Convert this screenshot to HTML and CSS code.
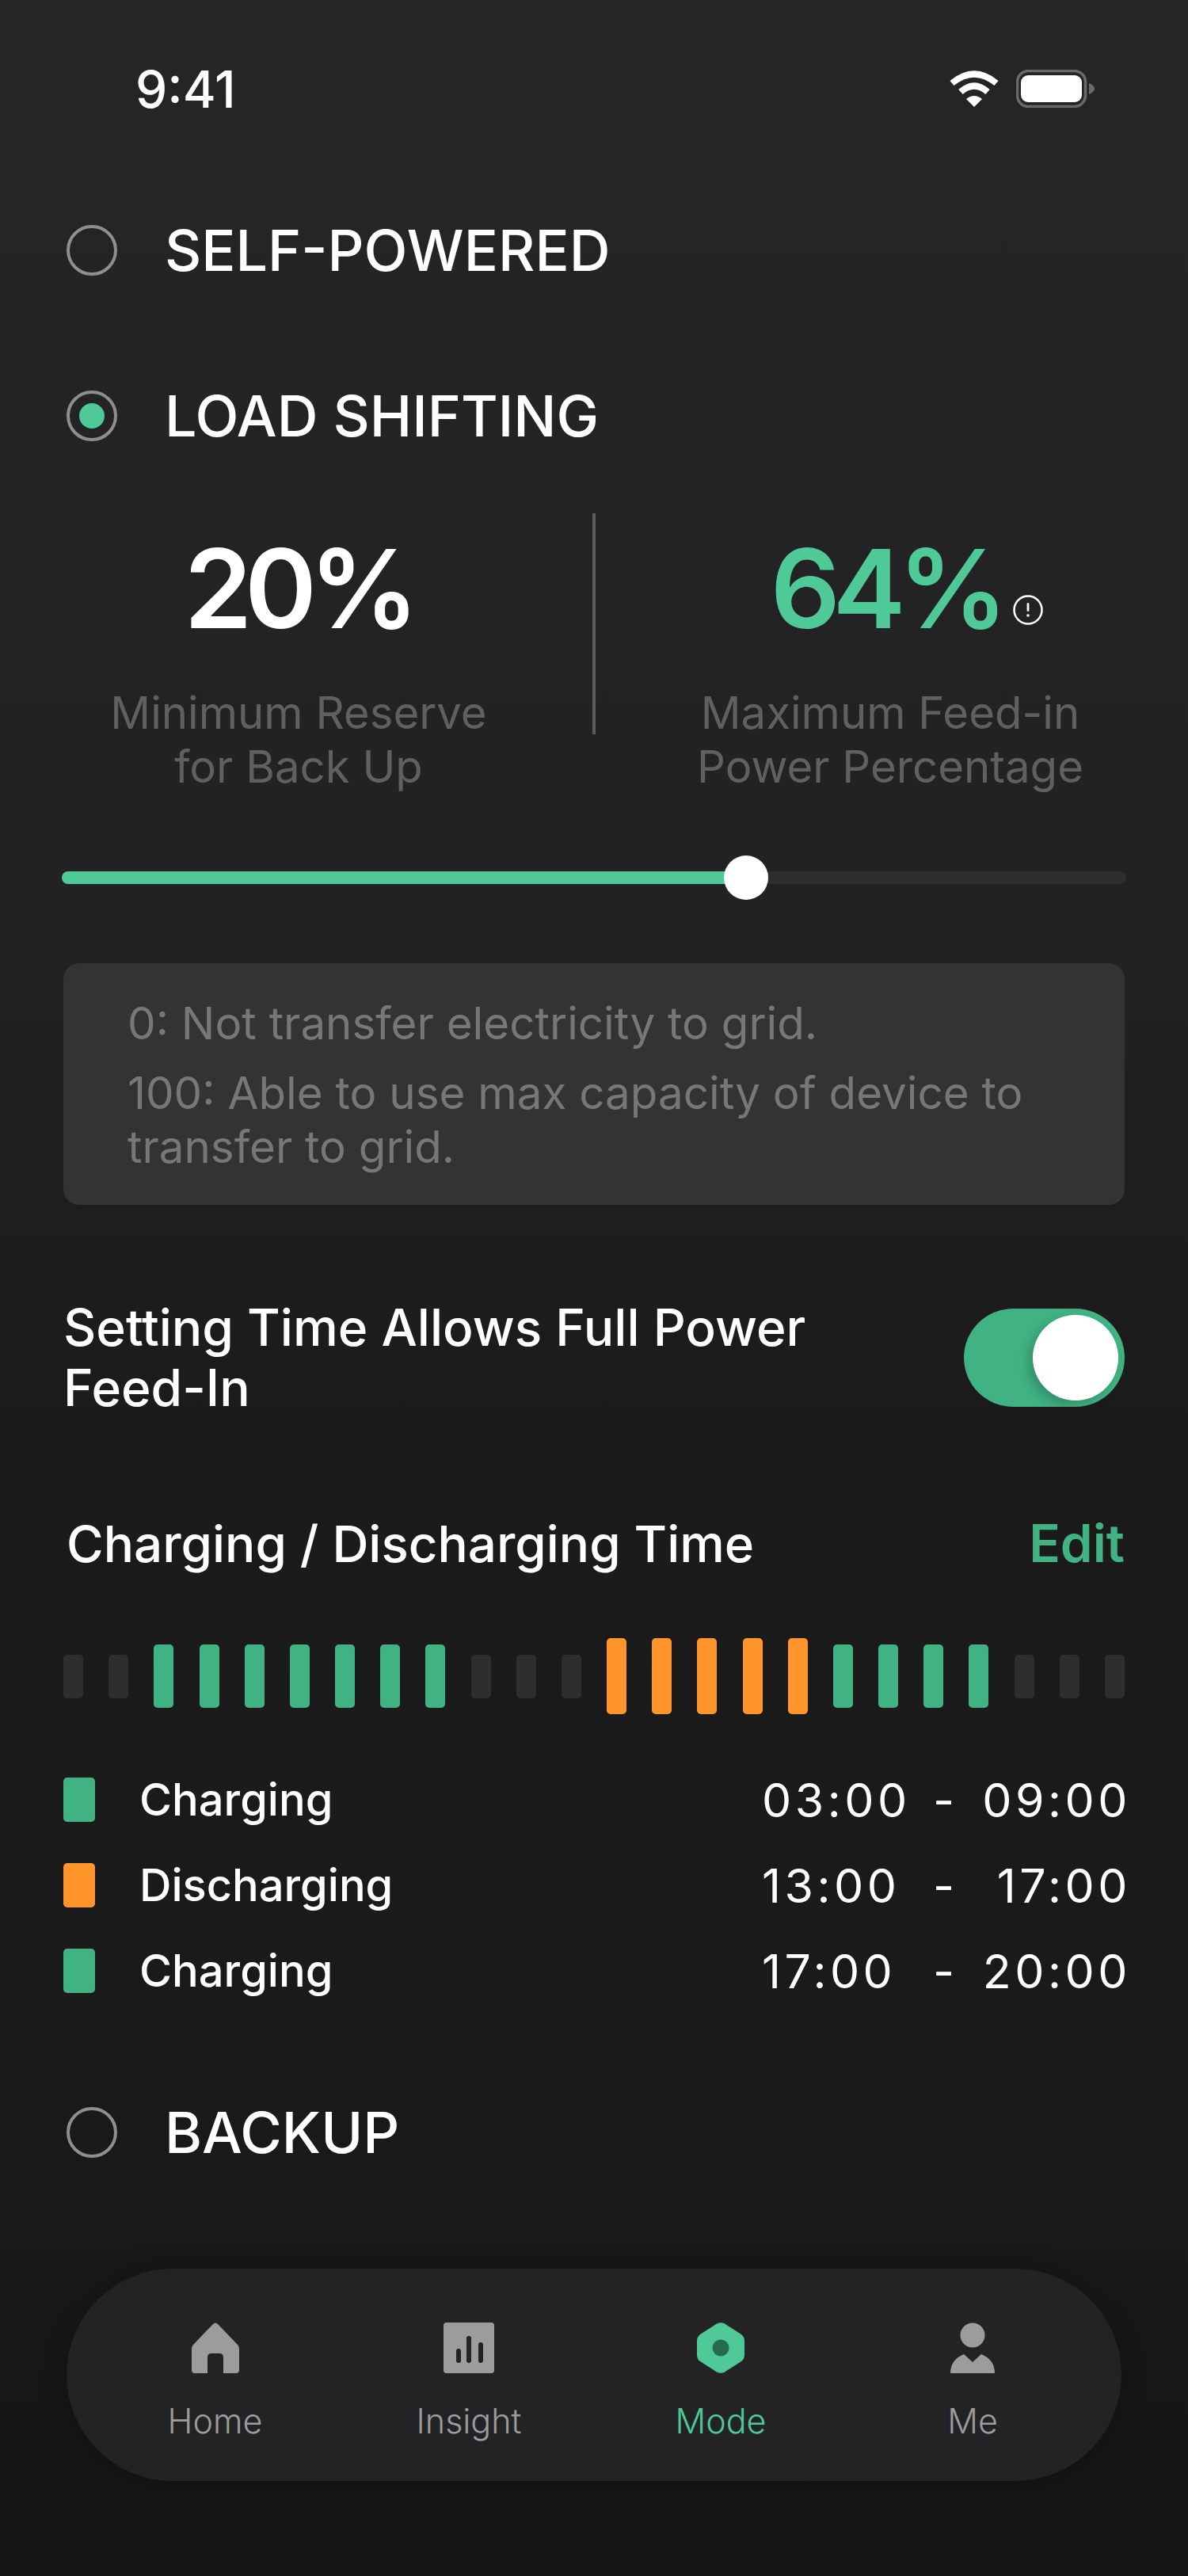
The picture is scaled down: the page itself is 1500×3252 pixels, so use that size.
FILE: index.html

```html
<!DOCTYPE html>
<html lang="en">
<head>
  <meta charset="UTF-8" />
  <meta name="viewport" content="width=device-width, initial-scale=1" />
  <title>Mode</title>
  <link rel="stylesheet" href="styles.css">
</head>
<body>
  <div class="status">
    <span class="clock">9:41</span>
    <div class="status-icons">
      <svg class="wifi" width="64" height="46" viewBox="0 0 64 46">
        <path d="M4 16 Q32 -7 60 16" fill="none" stroke="#fff" stroke-width="8" />
        <path d="M15 27 Q32 12 49 27" fill="none" stroke="#fff" stroke-width="8" />
        <path d="M22 36 Q32 28 42 36 L32 46 Z" fill="#fff" />
      </svg>
      <svg class="battery" width="99" height="48" viewBox="0 0 99 48">
        <rect x="1.5" y="1.5" width="86" height="45" rx="14" fill="none" stroke="#6a6a6a" stroke-width="3.5" />
        <rect x="6" y="7" width="77" height="34" rx="9" fill="#fff" />
        <path d="M92 17 Q99 20 99 24 Q99 28 92 31 Z" fill="#6a6a6a" />
      </svg>
    </div>
  </div>

  <div class="mode first">
    <span class="radio"></span>
    <span class="mode-name">SELF-POWERED</span>
  </div>
  <div class="mode second">
    <span class="radio on"></span>
    <span class="mode-name">LOAD SHIFTING</span>
  </div>

  <div class="stats">
    <div class="stat left">
      <div class="stat-value">20%</div>
      <div class="stat-label">Minimum Reserve<br>for Back Up</div>
    </div>
    <div class="divider"></div>
    <div class="stat right">
      <div class="stat-value green">
        <span class="value-wrap">64%
          <svg class="alert" width="38" height="38" viewBox="0 0 38 38">
            <circle cx="19" cy="19" r="17.5" fill="none" stroke="#fff" stroke-width="2.5" />
            <rect x="17.6" y="10" width="2.8" height="11" rx="1.4" fill="#fff" />
            <circle cx="19" cy="26" r="1.8" fill="#fff" />
          </svg>
        </span>
      </div>
      <div class="stat-label">Maximum Feed-in<br>Power Percentage</div>
    </div>
  </div>

  <div class="slider">
    <div class="slider-fill"></div>
    <div class="slider-thumb"></div>
  </div>

  <div class="note">
    <p>0: Not transfer electricity to grid.</p>
    <p>100: Able to use max capacity of device to transfer to grid.</p>
  </div>

  <div class="setting">
    <div class="setting-text">Setting Time Allows Full Power Feed-In</div>
    <div class="toggle"><div class="knob"></div></div>
  </div>

  <div class="time-head">
    <span>Charging / Discharging Time</span>
    <span class="edit">Edit</span>
  </div>

  <div class="bars">
    <i class="idle"></i><i class="idle"></i>
    <i class="charge"></i><i class="charge"></i><i class="charge"></i><i class="charge"></i><i class="charge"></i><i class="charge"></i><i class="charge"></i>
    <i class="idle"></i><i class="idle"></i><i class="idle"></i>
    <i class="discharge"></i><i class="discharge"></i><i class="discharge"></i><i class="discharge"></i><i class="discharge"></i>
    <i class="charge"></i><i class="charge"></i><i class="charge"></i><i class="charge"></i>
    <i class="idle"></i><i class="idle"></i><i class="idle"></i>
  </div>

  <div class="slots">
    <div class="slot">
      <span class="swatch"></span>
      <span class="slot-name">Charging</span>
      <span class="slot-time"><span>03:00</span><span class="dash">-</span><span>09:00</span></span>
    </div>
    <div class="slot">
      <span class="swatch orange"></span>
      <span class="slot-name">Discharging</span>
      <span class="slot-time"><span>13:00</span><span class="dash">-</span><span>17:00</span></span>
    </div>
    <div class="slot">
      <span class="swatch"></span>
      <span class="slot-name">Charging</span>
      <span class="slot-time"><span>17:00</span><span class="dash">-</span><span>20:00</span></span>
    </div>
  </div>

  <div class="mode third">
    <span class="radio"></span>
    <span class="mode-name">BACKUP</span>
  </div>

  <nav class="tabbar">
    <div class="tab">
      <svg width="60" height="64" viewBox="0 0 60 64">
        <path fill-rule="evenodd" d="M27 2 Q30 -1 33 2 L58 28 Q60 30 60 33 V60 Q60 64 56 64 H40 V44 Q40 39 35 39 H25 Q20 39 20 44 V64 H4 Q0 64 0 60 V33 Q0 30 2 28 Z" fill="#9c9c9c" />
      </svg>
      <span>Home</span>
    </div>
    <div class="tab">
      <svg width="64" height="64" viewBox="0 0 64 64">
        <rect width="64" height="64" rx="4" fill="#9c9c9c" />
        <rect x="16" y="33" width="6" height="18" rx="3" fill="#232326" />
        <rect x="29" y="17" width="6" height="34" rx="3" fill="#232326" />
        <rect x="44" y="25" width="6" height="26" rx="3" fill="#232326" />
      </svg>
      <span>Insight</span>
    </div>
    <div class="tab active">
      <svg width="60" height="64" viewBox="0 0 60 64">
        <path d="M25 1.5 Q30 -1 35 1.5 L56 15 Q60 18 60 23 V41 Q60 46 56 49 L35 62.5 Q30 65 25 62.5 L4 49 Q0 46 0 41 V23 Q0 18 4 15 Z" fill="#4fc998" />
        <ellipse cx="30" cy="32" rx="10.5" ry="10.5" fill="#27694e" />
      </svg>
      <span>Mode</span>
    </div>
    <div class="tab">
      <svg width="56" height="64" viewBox="0 0 56 64">
        <ellipse cx="28" cy="16" rx="15.500" ry="15.500" fill="#9c9c9c" />
        <path d="M0 64 Q0 47 17 40 L28 50 L39 40 Q56 47 56 64 Z" fill="#9c9c9c" />
      </svg>
      <span>Me</span>
    </div>
  </nav>
</body>
</html>
```

FILE: styles.css

```css
html, body {
  margin: 0;
  padding: 0;
}
body {
  width: 1500px;
  height: 3252px;
  overflow: hidden;
  background: linear-gradient(180deg, #252528 0%, #222225 35%, #1b1b1c 55%, #1a1a1a 80%, #151515 100%);
  color: #fff;
  font-family: Inter, "Liberation Sans", sans-serif;
}

/* status bar */
.status {
  height: 224px;
  display: flex;
  align-items: center;
  justify-content: space-between;
  padding: 0 118px 0 171px;
  box-sizing: border-box;
}
.clock {
  font-size: 64px;
  font-weight: 500;
}
.status-icons {
  display: flex;
  align-items: center;
  gap: 21px;
}

/* radio rows */
.mode {
  display: flex;
  align-items: center;
  height: 64px;
  padding-left: 84px;
}
.mode.first { margin-top: 60px; }
.mode.second { margin-top: 145px; }
.mode.third { margin-top: 144px; }
.radio {
  width: 64px;
  height: 64px;
  box-sizing: border-box;
  border: 4px solid #8e8e8e;
  border-radius: 50%;
  display: flex;
  align-items: center;
  justify-content: center;
}
.radio.on::after {
  content: "";
  width: 32px;
  height: 32px;
  border-radius: 50%;
  background: #4fc998;
}
.mode-name {
  margin-left: 60px;
  font-size: 71.700px;
  font-weight: 500;
}

/* percentages */
.stats {
  margin-top: 91px;
  display: grid;
  grid-template-columns: 748px 4px 748px;
}
.stat {
  text-align: center;
}
.stat.left .stat-label {
  padding-left: 6px;
}
.stat.right .stat-label {
  padding-right: 4px;
}
.stat-value {
  font-size: 138px;
  font-weight: 600;
  line-height: 190px;
  letter-spacing: -9.500px;
}
.stat.left .stat-value {
  padding-left: 4px;
}
.stat-value.green {
  padding-right: 16px;
}
.green {
  color: #4fc998;
}
.value-wrap {
  position: relative;
}
.alert {
  position: absolute;
  left: 100%;
  bottom: 37px;
  margin-left: 16px;
}
.stat-label {
  margin-top: 28px;
  font-size: 56.300px;
  line-height: 68px;
  color: #606060;
}
.divider {
  width: 4px;
  height: 279px;
  background: #5c5c5c;
}

/* slider */
.slider {
  position: relative;
  margin: 98px 78px 0;
  height: 16px;
  border-radius: 8px;
  background: #2e2e2e;
}
.slider-fill {
  width: 64.500%;
  height: 100%;
  border-radius: 8px;
  background: #4fc998;
}
.slider-thumb {
  position: absolute;
  left: 836px;
  top: -20px;
  width: 56px;
  height: 56px;
  border-radius: 50%;
  background: #fff;
}

/* info box */
.note {
  margin: 100px 80px 0;
  height: 305px;
  box-sizing: border-box;
  padding: 42px 80px 0 81px;
  background: #333334;
  border-radius: 20px;
  font-size: 56.500px;
  line-height: 68px;
  color: #777;
}
.note p {
  margin: 0 0 20px;
}

/* full power toggle */
.setting {
  margin: 131px 80px 0;
  display: flex;
  align-items: center;
  justify-content: space-between;
  height: 124px;
}
.setting-text {
  width: 1000px;
  font-size: 64px;
  font-weight: 500;
  line-height: 76px;
}
.toggle {
  width: 203px;
  height: 124px;
  box-sizing: border-box;
  padding: 8px 8px;
  border-radius: 62px;
  background: #41b284;
  display: flex;
  justify-content: flex-end;
}
.knob {
  width: 108px;
  height: 108px;
  border-radius: 50%;
  background: #fff;
  box-shadow: -6px 6px 14px rgba(0, 0, 0, 0.2);
}

/* schedule */
.time-head {
  margin: 126px 80px 0 84px;
  display: flex;
  justify-content: space-between;
  align-items: center;
  height: 92px;
  font-size: 63.700px;
  font-weight: 500;
}
.edit {
  color: #41b284;
  font-weight: 600;
  font-size: 65.500px;
}
.bars {
  margin: 74px 80px 0;
  height: 96px;
  display: flex;
  justify-content: space-between;
  align-items: center;
}
.bars i {
  width: 25px;
  border-radius: 5px;
}
.bars .idle {
  height: 55px;
  background: #2e2e2e;
}
.bars .charge {
  height: 80px;
  background: #41b284;
}
.bars .discharge {
  height: 96px;
  background: #ff952b;
}
.slots {
  margin: 80px 78px 0 80px;
}
.slot {
  display: flex;
  align-items: center;
  height: 56px;
  margin-bottom: 52px;
}
.swatch {
  width: 40px;
  height: 56px;
  border-radius: 5px;
  background: #41b284;
}
.swatch.orange {
  background: #ff952b;
}
.slot-name {
  margin-left: 56px;
  font-size: 56px;
  font-weight: 500;
}
.slot-time {
  margin-left: auto;
  margin-right: -6px;
  display: grid;
  grid-template-columns: 216px 22px 228px;
  width: 466px;
  font-size: 59px;
  font-weight: 400;
  letter-spacing: 4.500px;
}
.slot-time span:last-child {
  text-align: right;
}

/* bottom tabs */
.tabbar {
  margin: 140px 84px 0;
  height: 268px;
  box-sizing: border-box;
  padding: 68px 0 0 27px;
  border-radius: 134px;
  background: #232326;
  box-shadow: 0 0 30px rgba(0, 0, 0, 0.25);
  display: grid;
  grid-template-columns: 321px 320px 316px 320px;
}
.tab {
  display: flex;
  flex-direction: column;
  align-items: center;
  color: #9c9c9c;
  font-size: 43px;
  font-weight: 300;
}
.tab span {
  margin-top: 34px;
}
.tab.active {
  color: #4fc998;
}
```
